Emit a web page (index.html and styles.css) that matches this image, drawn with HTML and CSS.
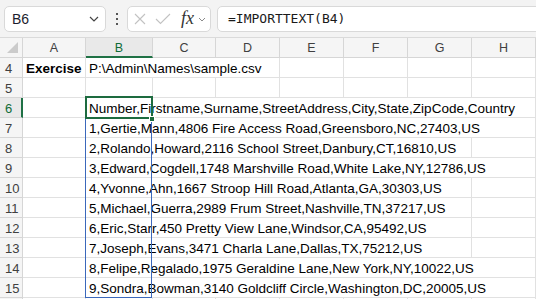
FILE: index.html
```html
<!DOCTYPE html>
<html lang="en">
<head>
    <meta charset="UTF-8">
    <title>IMPORTTEXT - Exercise</title>
    <link rel="stylesheet" href="styles.css">
</head>
<body>
    <div class="toolbar">
        <div class="namebox">
            <span>B6</span>
            <svg class="chev" width="10" height="6" viewBox="0 0 10 6"><path d="M1 1 L5 5 L9 1" /></svg>
        </div>
        <div class="dots"><i></i><i></i><i></i></div>
        <div class="fbuttons">
            <svg class="btn-x" width="12" height="12" viewBox="0 0 12 12"><path d="M1 1 L11 11 M11 1 L1 11" /></svg>
            <svg class="btn-ok" width="16" height="12" viewBox="0 0 16 12"><path d="M1 6 L5.5 10.5 L15 1" /></svg>
            <span class="fx">fx</span>
            <svg class="chev small" width="8" height="5" viewBox="0 0 8 5"><path d="M1 1 L4 4 L7 1" /></svg>
        </div>
        <div class="formula">=IMPORTTEXT(B4)</div>
    </div>

    <div class="sheet" id="sheet">
        <!-- se llena con JavaScript -->
        <div class="spill"></div>
        <div class="selection"></div>
        <div class="handle"></div>
    </div>

    <script>
        const cols = ['A', 'B', 'C', 'D', 'E', 'F', 'G', 'H'];
        const widths = [63, 67, 63, 64, 64, 64, 64, 64];
        const rows = [
            { n: 4, A: 'Exercise', B: 'P:\\Admin\\Names\\sample.csv' },
            { n: 5 },
            { n: 6, B: 'Number,Firstname,Surname,StreetAddress,City,State,ZipCode,Country' },
            { n: 7, B: '1,Gertie,Mann,4806 Fire Access Road,Greensboro,NC,27403,US' },
            { n: 8, B: '2,Rolando,Howard,2116 School Street,Danbury,CT,16810,US' },
            { n: 9, B: '3,Edward,Cogdell,1748 Marshville Road,White Lake,NY,12786,US' },
            { n: 10, B: '4,Yvonne,Ahn,1667 Stroop Hill Road,Atlanta,GA,30303,US' },
            { n: 11, B: '5,Michael,Guerra,2989 Frum Street,Nashville,TN,37217,US' },
            { n: 12, B: '6,Eric,Starr,450 Pretty View Lane,Windsor,CA,95492,US' },
            { n: 13, B: '7,Joseph,Evans,3471 Charla Lane,Dallas,TX,75212,US' },
            { n: 14, B: '8,Felipe,Regalado,1975 Geraldine Lane,New York,NY,10022,US' },
            { n: 15, B: '9,Sondra,Bowman,3140 Goldcliff Circle,Washington,DC,20005,US' },
            { n: '' } // fila 16, apenas visible
        ];

        function cell(cls, text) {
            const div = document.createElement('div');
            div.className = cls;
            if (text) div.innerHTML = `<span>${text}</span>`;
            return div;
        }

        function buildSheet() {
            const sheet = document.getElementById('sheet');
            const overlay = sheet.firstElementChild;

            // fila de encabezados
            sheet.insertBefore(cell('corner'), overlay);
            cols.forEach(c => {
                sheet.insertBefore(cell('colhead' + (c === 'B' ? ' active' : ''), c), overlay);
            });

            rows.forEach(row => {
                sheet.insertBefore(cell('rowhead' + (row.n === 6 ? ' active' : ''), String(row.n)), overlay);
                let i = 0;
                while (i < cols.length) {
                    const text = row[cols[i]];
                    const c = cell('c' + (row.n === 4 && i === 0 ? ' bold' : ''), text);
                    sheet.insertBefore(c, overlay);
                    if (text) {
                        // el texto se desborda sobre las celdas vacias de la derecha
                        const need = c.firstChild.offsetWidth + 3;
                        let span = 1, w = widths[i];
                        while (w < need && i + span < cols.length && !row[cols[i + span]]) {
                            w += widths[i + span];
                            span++;
                        }
                        c.style.gridColumn = `span ${span}`;
                        i += span;
                    } else {
                        i++;
                    }
                }
            });
        }

        buildSheet();
    </script>
</body>
</html>
```

FILE: styles.css
```css
* {
    box-sizing: border-box;
    margin: 0;
    padding: 0;
}

body {
    font-family: "Liberation Sans", Arial, sans-serif;
    background-color: #fff;
    overflow: hidden;
    width: 536px;
    height: 299px;
}

/* barra de formulas */
.toolbar {
    height: 38px;
    background-color: #f3f3f3;
    border-bottom: 1px solid #dadada;
    display: flex;
    align-items: flex-start;
    padding: 6px 0 0 4px;
}

.namebox {
    width: 102px;
    height: 26px;
    background: #fff;
    border: 1px solid #d9d9d9;
    border-radius: 5px;
    display: flex;
    align-items: center;
    justify-content: space-between;
    padding: 0 6px 0 7px;
    font-size: 14px;
    color: #1c1c2e;
}

.chev path {
    fill: none;
    stroke: #444;
    stroke-width: 1.2;
}

.chev.small path {
    stroke: #8a8a8a;
    stroke-width: 1;
}

.dots {
    width: 21px;
    height: 26px;
    display: flex;
    flex-direction: column;
    align-items: center;
    justify-content: center;
    gap: 3px;
}

.dots i {
    width: 2px;
    height: 2px;
    background: #555;
}

.fbuttons {
    width: 84px;
    height: 26px;
    background: #fff;
    border: 1px solid #d9d9d9;
    border-radius: 5px;
    display: flex;
    align-items: center;
    padding: 0 0 0 6px;
    margin-right: 6px;
}

.btn-x, .btn-ok {
    margin-right: 9px;
}

.btn-x path, .btn-ok path {
    fill: none;
    stroke: #c2c2c2;
    stroke-width: 1.1;
}

.btn-ok {
    margin-right: 10px;
}

.fx {
    font-family: "Liberation Serif", serif;
    font-style: italic;
    font-size: 18px;
    color: #333;
    margin-right: 4px;
    line-height: 1;
    padding-bottom: 2px;
}

.formula {
    flex: 1;
    height: 26px;
    margin-right: -8px;
    background: #fff;
    border: 1px solid #d9d9d9;
    border-radius: 5px;
    font-family: "DejaVu Sans Mono", monospace;
    font-size: 13px;
    line-height: 24px;
    padding-left: 10px;
    color: #1a1a1a;
}

/* hoja */
.sheet {
    position: relative;
    display: grid;
    grid-template-columns: 23px 63px 67px 63px 64px 64px 64px 64px 64px;
    grid-auto-rows: 20px;
    height: 261px;
    overflow: hidden;
}

.sheet > div {
    border-right: 1px solid #e1e1e1;
    border-bottom: 1px solid #e1e1e1;
}

.corner, .colhead, .rowhead {
    background-color: #f5f5f5;
    color: #404040;
    font-size: 12.5px;
}

.sheet > .corner, .sheet > .colhead, .sheet > .rowhead {
    border-color: #d6d6d6;
}

.corner {
    position: relative;
}

.corner::after {
    content: "";
    position: absolute;
    right: 4px;
    bottom: 4px;
    border-left: 11px solid transparent;
    border-bottom: 11px solid #cbcbcb;
}

.colhead {
    display: flex;
    align-items: flex-end;
    justify-content: center;
    line-height: 16px;
    padding-bottom: 1px;
}

.rowhead {
    display: flex;
    align-items: flex-end;
    padding-left: 5px;
    line-height: 16px;
    font-size: 13px;
}

.sheet > .colhead.active {
    background-color: #e9e9e9;
    color: #0e6b37;
    border-bottom: 2px solid #1f7145;
    padding-bottom: 0;
}

.sheet > .rowhead.active {
    background-color: #e9e9e9;
    color: #0e6b37;
    border-right: 2px solid #1f7145;
}

.c {
    display: flex;
    align-items: flex-end;
    padding-left: 3px;
    font-size: 13.5px;
    line-height: 16px;
    color: #000;
    white-space: nowrap;
}

.c.bold {
    font-weight: bold;
}

/* rango desbordado y seleccion */
.sheet > .spill {
    position: absolute;
    left: 85px;
    top: 58px;
    width: 67px;
    height: 202px;
    border: 1px solid #3b68bb;
}

.sheet > .selection {
    position: absolute;
    left: 85px;
    top: 58px;
    width: 68px;
    height: 23px;
    border: 2px solid #1d6b3f;
}

.sheet > .handle {
    position: absolute;
    left: 149px;
    top: 78px;
    width: 6px;
    height: 6px;
    background: #1d6b3f;
    border: 1px solid #fff;
}
```
